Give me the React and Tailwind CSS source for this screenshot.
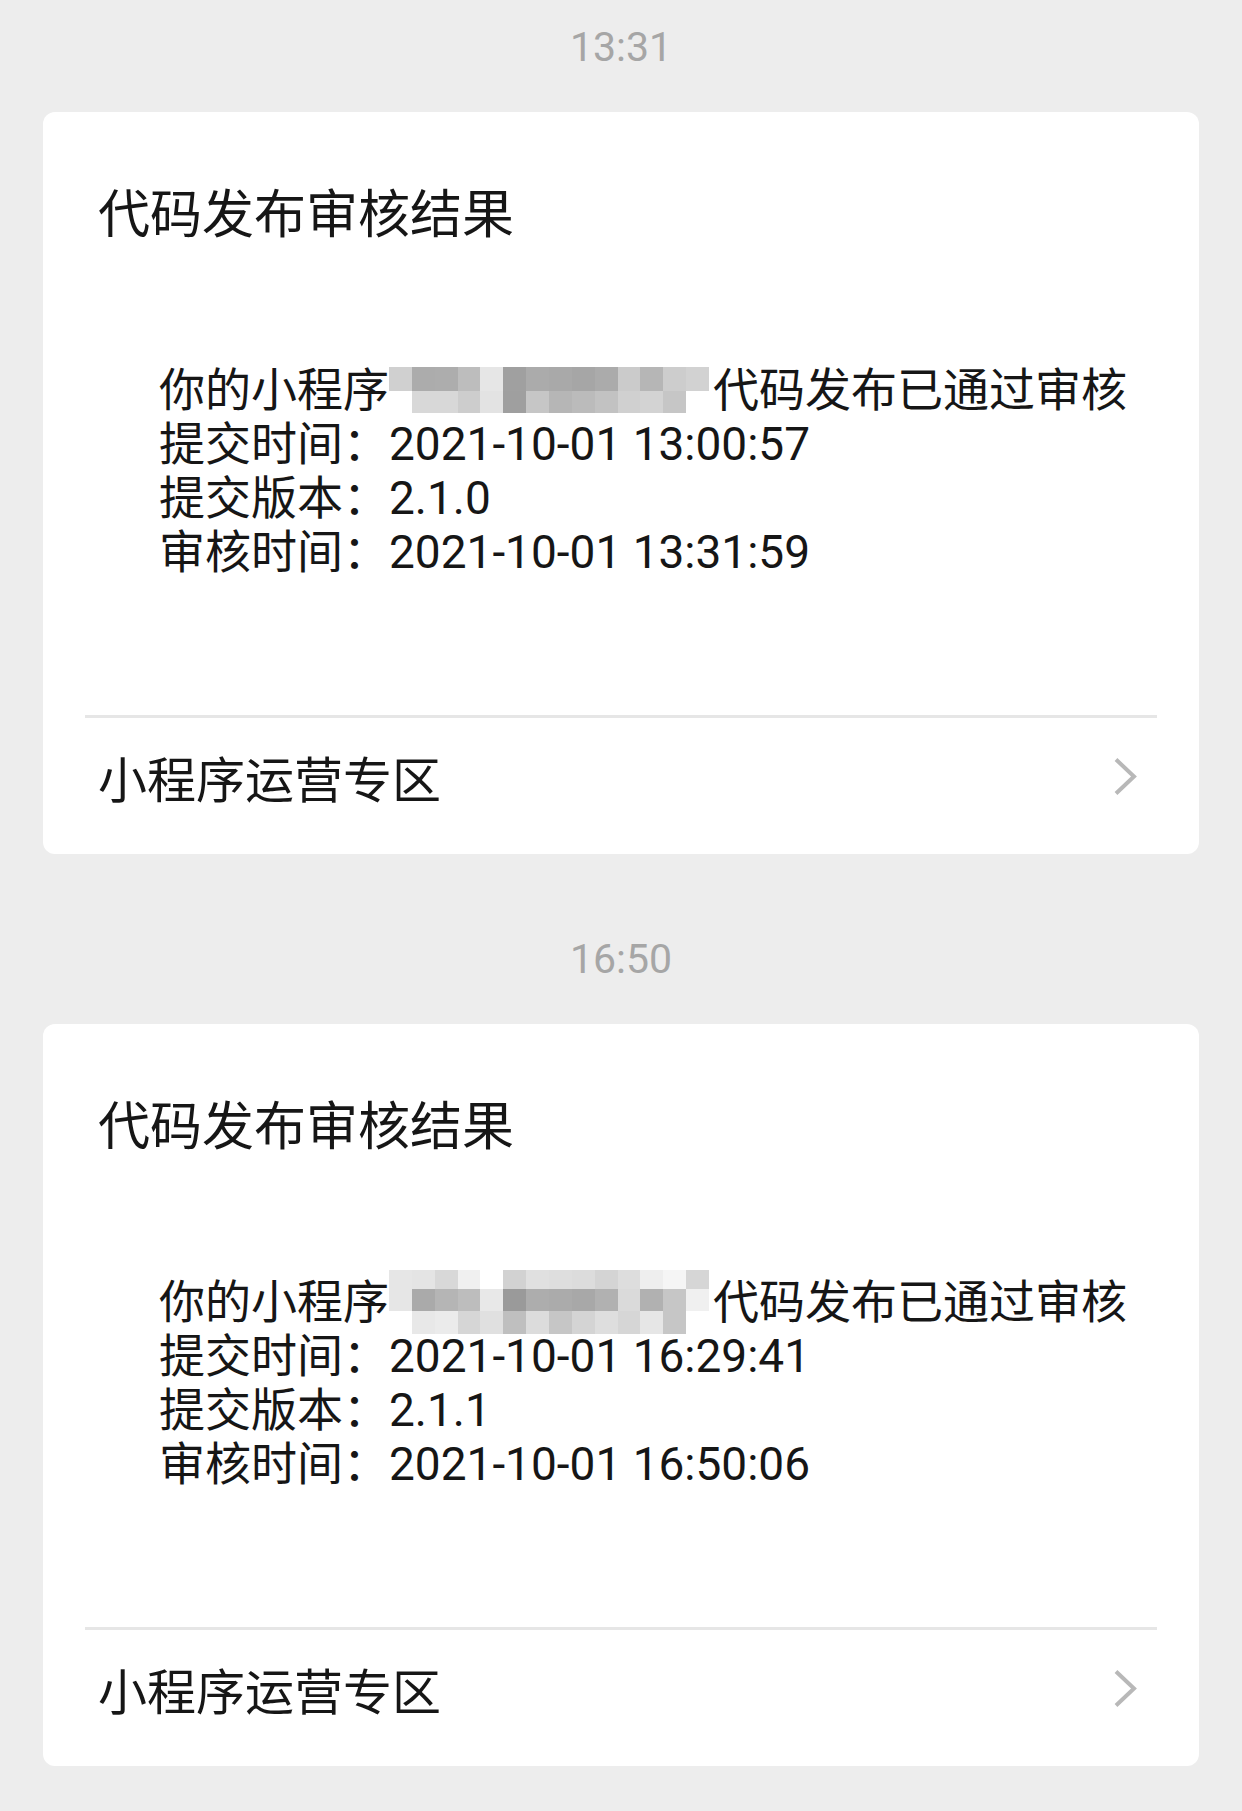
import React from 'react';

const FONT = { fontFamily: 'Roboto, "Noto Sans CJK SC", sans-serif' };

const messages = [
  {
    time: '13:31',
    submitted: '2021-10-01 13:00:57',
    version: '2.1.0',
    reviewed: '2021-10-01 13:31:59',
    mosaic: {
      shift: '',
      rows: [
        {
          h: 'h-[24px]',
          cells: ['#d0d0d0', '#acacac', '#adadad', '#bdbdbd', '#e6e6e6', '#a0a0a0', '#ababab', '#a9a9a9', '#a6a6a6', '#ababab', '#cbcbcb', '#b6b6b6', '#cdcdcd', '#d2d2d2'],
        },
        {
          h: 'h-[22px]',
          cells: [null, '#d8d8d8', '#d8d8d8', '#cdcdcd', '#e3e3e3', '#9f9f9f', '#c6c6c6', '#b6b6b6', '#bbbbbb', '#c2c2c2', '#d0d0d0', '#d3d3d3', '#c6c6c6', null],
        },
      ],
    },
  },
  {
    time: '16:50',
    submitted: '2021-10-01 16:29:41',
    version: '2.1.1',
    reviewed: '2021-10-01 16:50:06',
    mosaic: {
      shift: '-my-[5px]',
      rows: [
        {
          h: 'h-[19px]',
          cells: ['#e6e6e6', '#e4e4e4', '#d8d8d8', '#f0f0f0', null, '#d2d2d2', '#e0e0e0', '#dedede', '#dcdcdc', '#d4d4d4', '#dddddd', '#eeeeee', '#f5f5f5', '#d6d6d6'],
        },
        {
          h: 'h-[22px]',
          cells: ['#e6e6e6', '#aaaaaa', '#b5b5b5', '#bdbdbd', '#e8e8e8', '#9a9a9a', '#adadad', '#ababab', '#a8a8a8', '#b1b1b1', '#dadada', '#b1b1b1', '#c6c6c6', '#f0f0f0'],
        },
        {
          h: 'h-[23px]',
          cells: [null, '#e8e8e8', '#ebebeb', '#d6d6d6', '#e0e0e0', '#bfbfbf', '#dcdcdc', '#c6c6c6', '#d4d4d4', '#dedede', '#d6d6d6', '#e6e6e6', '#c6c6c6', null],
        },
      ],
    },
  },
];

// pixelated name, as in the screenshot
const Mosaic = ({ rows, shift }) => (
  <div className={`flex w-[320px] flex-none flex-col ${shift}`}>
    {rows.map((row, i) => (
      <div key={i} className={`flex ${row.h}`}>
        {row.cells.map((c, j) => (
          <div key={j} className="flex-1" style={{ backgroundColor: c || 'transparent' }} />
        ))}
      </div>
    ))}
  </div>
);

const Chevron = () => (
  <svg className="mb-[10px]" width="26" height="42" viewBox="0 0 26 42" fill="none">
    <path d="M3 3.5 L21 20.5 L3 37.5" stroke="#b8b8b8" strokeWidth="4" strokeLinejoin="miter" />
  </svg>
);

const MessageCard = ({ msg }) => (
  <div>
    <div className="flex h-[50px] items-center justify-center pt-[2px] text-[41px] leading-none text-[#a6a6a6]">
      {msg.time}
    </div>
    <div className="mt-[41px] rounded-[12px] bg-white">
      <div className="px-[55px] pt-[74px] text-[52px] leading-[60px] text-[#161616]">代码发布审核结果</div>
      <div className="mt-[117px] pl-[116px] text-[46px] leading-[54px] text-[#161616]">
        <div className="flex items-center whitespace-nowrap">
          <span>你的小程序</span>
          <Mosaic rows={msg.mosaic.rows} shift={msg.mosaic.shift} />
          <span className="ml-[4px]">代码发布已通过审核</span>
        </div>
        <div className="whitespace-nowrap">提交时间：{msg.submitted}</div>
        <div className="whitespace-nowrap">提交版本：{msg.version}</div>
        <div className="whitespace-nowrap">审核时间：{msg.reviewed}</div>
      </div>
      <div className="mx-[42px] mt-[136px] h-[3px] bg-[#e6e6e6]" />
      <div className="flex h-[136px] items-center justify-between pb-[8px] pl-[55px] pr-[60px]">
        <span className="text-[49px] leading-[56px] text-[#161616]">小程序运营专区</span>
        <Chevron />
      </div>
    </div>
  </div>
);

export default function App() {
  return (
    <div className="min-h-screen bg-[#ededed]" style={FONT}>
      <div className="flex flex-col gap-[79px] px-[43px] pb-[46px] pt-[21px]">
        {messages.map((m) => (
          <MessageCard key={m.time} msg={m} />
        ))}
      </div>
    </div>
  );
}
